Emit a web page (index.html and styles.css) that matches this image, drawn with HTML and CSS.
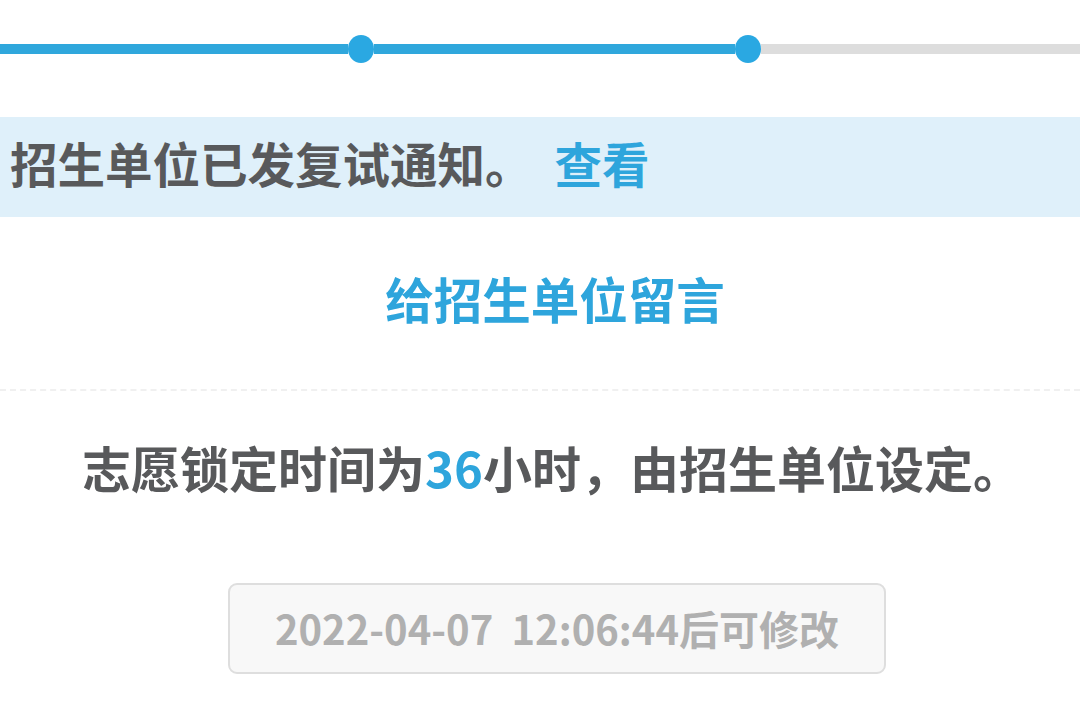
FILE: index.html
```html
<!DOCTYPE html>
<html lang="zh-CN">
<head>
<meta charset="utf-8">
<link rel="stylesheet" href="styles.css">
</head>
<body>
<div class="progress">
  <div class="seg seg-first done"></div>
  <div class="dot"></div>
  <div class="seg seg-mid done"></div>
  <div class="dot"></div>
  <div class="seg seg-rest"></div>
</div>
<div class="banner">
  <span class="banner-text">招生单位已发复试通知。</span><span class="link">查看</span>
</div>
<div class="message">给招生单位留言</div>
<div class="divider"></div>
<div class="lock">志愿锁定时间为<span class="num">36</span>小时，由招生单位设定。</div>
<div class="btn-row">
  <div class="btn">2022-04-07  12:06:44后可修改</div>
</div>
</body>
</html>
```
FILE: styles.css
```css
html, body {
  margin: 0;
  padding: 0;
  background: #ffffff;
  width: 1080px;
  height: 723px;
  overflow: hidden;
  font-family: "Noto Sans CJK SC", "Noto Sans", sans-serif;
  font-weight: 700;
}
.progress {
  display: flex;
  align-items: center;
  height: 28px;
  padding-top: 35px;
  margin-bottom: 54px;
}
.seg {
  height: 10px;
}
.seg.done {
  background: #2fa7dc;
}
.seg-first {
  width: 348px;
}
.seg-mid {
  width: 361px;
}
.seg-rest {
  flex: 1;
  background: #dddddd;
}
.dot {
  width: 26px;
  height: 28px;
  border-radius: 50%;
  background: #2aa8e2;
}
.banner {
  height: 90px;
  padding-bottom: 10px;
  background: #dff0fa;
  display: flex;
  align-items: center;
  padding-left: 10px;
  font-size: 47.5px;
  color: #58595b;
}
.banner-text {
  margin-right: 22px;
}
.link {
  color: #2ea5dc;
}
.message {
  height: 162px;
  padding-bottom: 10px;
  display: flex;
  align-items: center;
  justify-content: center;
  padding-left: 30px;
  font-size: 48.5px;
  color: #2ea5dc;
}
.divider {
  border-top: 2px dashed #f0f0f0;
}
.lock {
  height: 150px;
  padding-bottom: 10px;
  display: flex;
  align-items: center;
  justify-content: center;
  padding-left: 24px;
  font-size: 49px;
  color: #58595b;
}
.num {
  color: #2ea5dc;
}
.btn-row {
  padding-top: 32px;
  padding-left: 228px;
}
.btn {
  width: 654px;
  height: 85px;
  padding-bottom: 2px;
  border: 2px solid #dedede;
  border-radius: 9px;
  background: #f8f8f8;
  display: flex;
  align-items: center;
  justify-content: center;
  font-size: 40px;
  color: #b0b0b0;
  white-space: pre;
}
```
